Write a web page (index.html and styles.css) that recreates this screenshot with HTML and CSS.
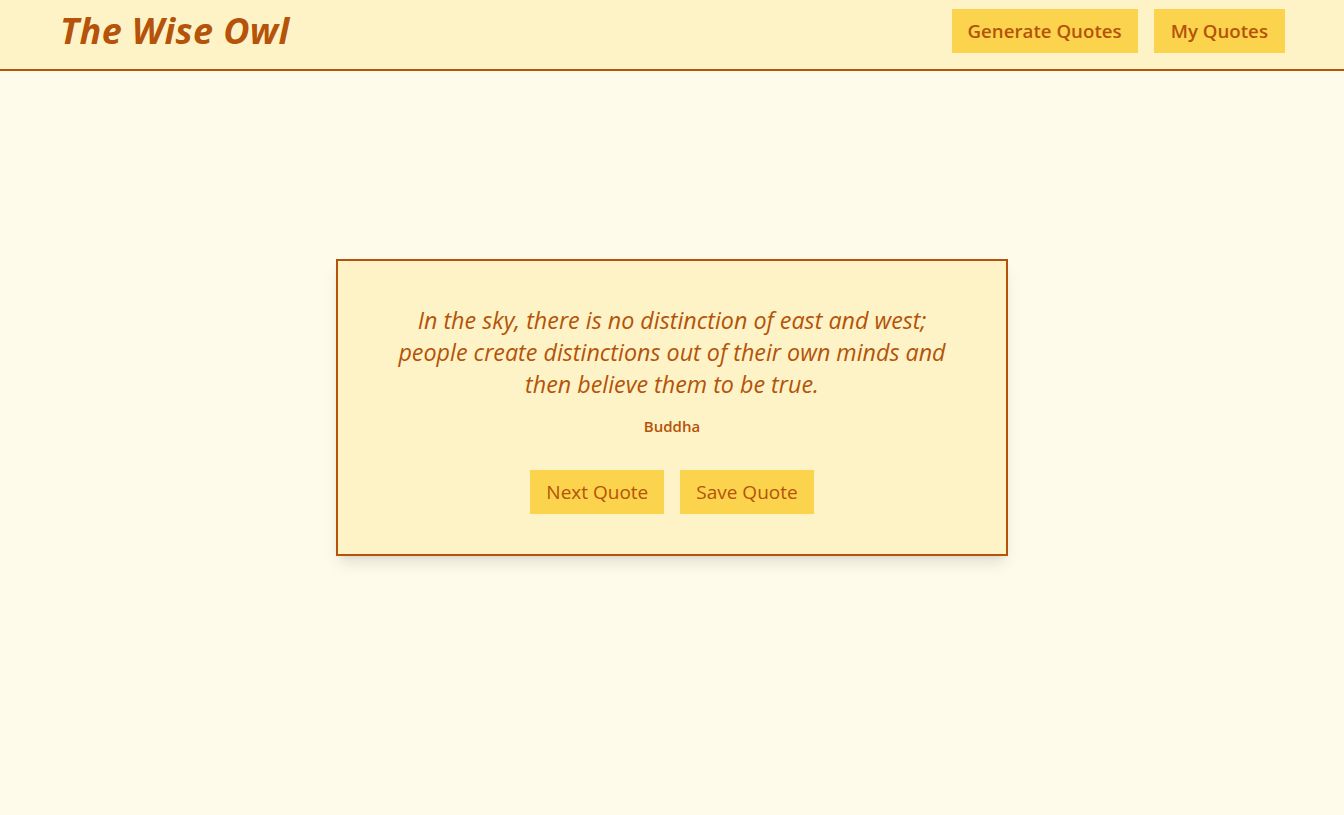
FILE: index.html
```html
<!DOCTYPE html>
<html lang="en">
<head>
<meta charset="utf-8">
<title>The Wise Owl</title>
<link rel="stylesheet" href="styles.css">
</head>
<body>
<header class="site-header">
  <h1 class="brand">The Wise Owl</h1>
  <nav class="nav">
    <button class="btn btn-nav">Generate Quotes</button>
    <button class="btn btn-nav">My Quotes</button>
  </nav>
</header>
<main class="main">
  <section class="card">
    <p class="quote">In the sky, there is no distinction of east and west; people create distinctions out of their own minds and then believe them to be true.</p>
    <p class="author">Buddha</p>
    <div class="actions">
      <button class="btn btn-action">Next Quote</button>
      <button class="btn btn-action">Save Quote</button>
    </div>
  </section>
</main>
</body>
</html>
```

FILE: styles.css
```css
* { box-sizing: border-box; }
html, body { margin: 0; padding: 0; }
body {
  background: #fffbeb;
  color: #b45309;
  font-family: "Open Sans", "Noto Sans", sans-serif;
  min-height: 100vh;
}
.site-header {
  display: flex;
  align-items: center;
  justify-content: space-between;
  height: 71px;
  padding: 9px 59px 16px 60px;
  background: #fef3c7;
  border-bottom: 2px solid #b45309;
}
.brand {
  margin: 0;
  font-size: 36px;
  line-height: 40px;
  font-weight: 700;
  font-style: italic;
  color: #b45309;
  letter-spacing: 0.4px;
}
.nav { display: flex; gap: 16px; }
.btn {
  border: none;
  background: #fcd34d;
  color: #b45309;
  font-family: inherit;
  font-size: 19px;
  line-height: 28px;
  padding: 8px 16px;
  height: 44px;
  cursor: pointer;
}
.btn-nav { font-weight: 600; font-size: 18.7px; padding: 8px 17px; }
.btn-nav:first-child { padding: 8px 16px; }
.main {
  height: calc(100vh - 71px);
  padding-bottom: 71px;
  display: flex;
  align-items: center;
  justify-content: center;
}
.card {
  width: 672px;
  padding: 40px;
  background: #fef3c7;
  border: 2px solid #b45309;
  box-shadow: 0 10px 15px -3px rgba(0,0,0,0.1), 0 4px 6px -4px rgba(0,0,0,0.1);
  text-align: center;
}
.quote {
  margin: 3px auto 0;
  max-width: 560px;
  font-size: 23.3px;
  line-height: 32px;
  font-style: italic;
}
.author {
  margin: 16px 0 0;
  font-size: 15px;
  line-height: 20px;
  font-weight: 600;
}
.actions {
  display: flex;
  justify-content: center;
  gap: 16px;
  margin-top: 34px;
}
.btn-action { font-weight: 400; }
```
